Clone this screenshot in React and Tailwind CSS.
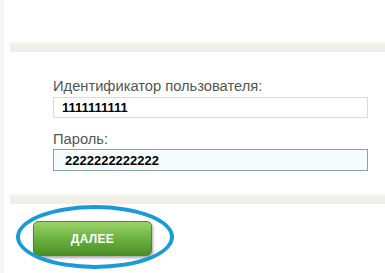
const FONT = { fontFamily: '"Liberation Sans", Arial, sans-serif' }

function Divider() {
  return (
    <div className="h-[10px] flex flex-col">
      <div className="h-[2px] bg-[#f6f5f1]" />
      <div className="flex-1 bg-[#f0efe8]" />
      <div className="h-[2px] bg-[#f2ebe7]" />
    </div>
  )
}

export default function App() {
  return (
    <div className="relative w-[385px] h-[273px] bg-white overflow-hidden flex" style={FONT}>
      {/* left page edge */}
      <div className="w-[10px] flex">
        <div className="w-[4px] bg-[#f6f6f4]" />
      </div>

      <div className="flex-1 flex flex-col pt-[42px]">
        <Divider />

        <form className="pl-[43px] pr-[17px] pt-[26px] flex flex-col">
          <label className="text-[14.7px] leading-[16px] text-[#555]">Идентификатор пользователя:</label>
          <input
            readOnly
            value="1111111111"
            className="mt-[3px] h-[21px] border border-[#dcdcdc] bg-white px-[8px] text-[13px] font-bold text-black outline-none"
          />
          <label className="mt-[13px] text-[14.7px] leading-[16px] text-[#555]">Пароль:</label>
          <input
            readOnly
            value="2222222222222"
            className="mt-[2px] h-[22px] border border-[#8aa3a8] bg-[#f6fcfd] px-[11px] text-[13px] font-bold text-black outline-none"
          />
        </form>

        <div className="mt-[23px]">
          <Divider />
        </div>

        <div className="pl-[23px] pt-[17px]">
          <button
            type="button"
            className="w-[119px] h-[35px] rounded-[5px] border border-[#4d8a2c] bg-gradient-to-b from-[#9bd26a] via-[#6cb23f] to-[#4a8f27] text-white text-[12px] font-bold tracking-wide shadow-[1px_2px_3px_rgba(0,0,0,0.35)]"
          >
            ДАЛЕЕ
          </button>
        </div>
      </div>

      {/* highlight annotation */}
      <div className="absolute left-[16px] top-[205px] w-[158px] h-[64px] rounded-[50%] border-[4px] border-[#1a9bd7]" />
    </div>
  )
}
